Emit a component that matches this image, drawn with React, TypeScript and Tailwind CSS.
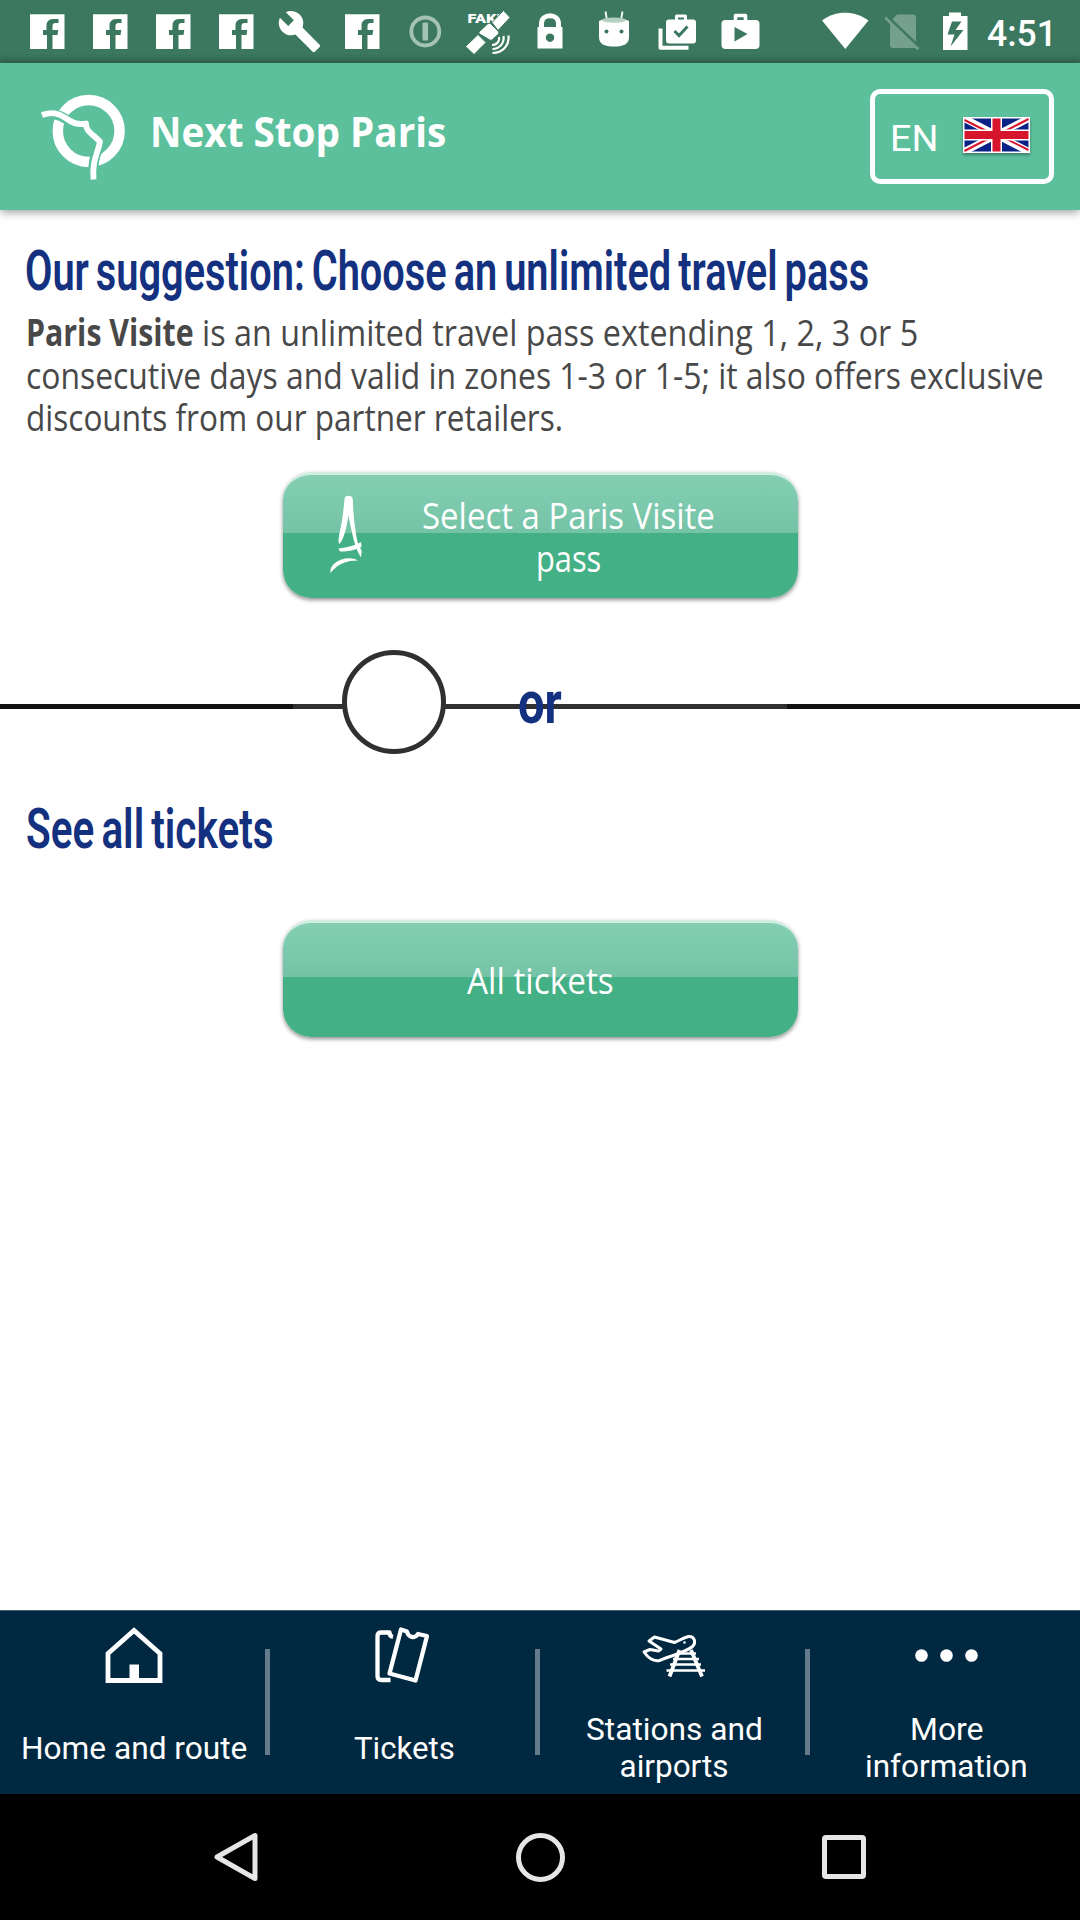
import { useLayoutEffect, useRef, useState } from "react";
import type { ReactNode } from "react";
import { MdBuild } from "react-icons/md";

/** A single line of text condensed or stretched horizontally to an exact width. */
function FitText({ width, className = "", children }: { width: number; className?: string; children: ReactNode }) {
  const ref = useRef<HTMLSpanElement>(null);
  const [scale, setScale] = useState(1);
  useLayoutEffect(() => {
    if (ref.current) setScale(width / ref.current.offsetWidth);
  }, [width]);
  return (
    <span className="block" style={{ width }}>
      <span
        ref={ref}
        className={`inline-block origin-left whitespace-nowrap ${className}`}
        style={{ transform: `scaleX(${scale})` }}
      >
        {children}
      </span>
    </span>
  );
}

function Slot({ children }: { children: ReactNode }) {
  return (
    <svg width="63" height="63" viewBox="0 0 63 63" fill="#fff" className="shrink-0">
      {children}
    </svg>
  );
}

function FacebookIcon() {
  return (
    <Slot>
      <path d="M14 14.300h34.500V49H36.500V35H41.500l.8-5h-5.800v-4c0-2 1-3 3-3h3v-4h-5.500c-4.500 0-6.500 3-6.500 6.500V30h-3.500v5H31v14H14z" />
    </Slot>
  );
}

function StatusBar() {
  return (
    <div className="flex h-[63px] items-center bg-linear-to-b from-[#3b785f] from-85% to-[#346a54] pl-4">
      <FacebookIcon />
      <FacebookIcon />
      <FacebookIcon />
      <FacebookIcon />
      <div className="flex h-[63px] w-[63px] items-center justify-center">
        <MdBuild className="h-[45px] w-[45px] text-white" />
      </div>
      <FacebookIcon />
      <Slot>
        <circle cx="31.300" cy="31.500" r="14" fill="none" stroke="#a4c3b5" strokeWidth="3.800" />
        <rect x="28.500" y="22.500" width="5.600" height="18" rx="1" fill="#a4c3b5" />
      </Slot>
      <Slot>
        <text x="10.500" y="22.500" fontSize="13" fontWeight="900" fontFamily="Roboto, sans-serif" textLength="38" lengthAdjust="spacingAndGlyphs">
          FAKE
        </text>
        <g stroke="#3b785f" strokeWidth="1">
          <path d="M35 22.500 46.500 10.500l6.500 7-12 13z" />
          <path d="M8.500 46.500 21 34.500l8 8L17 54.500z" />
          <path d="M22.500 31.500 30.500 24c1-1 2.500-1 3.500 0l7 7c1 1 1 2.500 0 3.500l-5.500 5c-1 1-2.500 1-3.500 0l-8.500-5c-2-1-2-2-1-3z" />
        </g>
        <g fill="none" stroke="#fff" strokeWidth="2.200">
          <path d="M42 37c1 4-2 8-7 8" />
          <path d="M46.500 36c1 7-4 13-11 13" />
          <path d="M51.500 35.500c1 10-6 17.500-16 17.500" />
        </g>
      </Slot>
      <Slot>
        <path d="M21.500 28V23.500c0-10.500 17-10.500 17 0V28" fill="none" stroke="#fff" strokeWidth="5" />
        <path fillRule="evenodd" d="M17.500 27h25v21.500h-25zM30 33.500a4.200 4.200 0 1 0 .01 0z" />
      </Slot>
      <Slot>
        <path d="M22.500 11.500 24 20M39.500 11.500 38 20" stroke="#fff" strokeWidth="1.800" />
        <path d="M16 21c5-3.500 25-3.500 30 0v16c0 7-5 9.500-15 9.500S16 44 16 37z" />
        <ellipse cx="31" cy="20.200" rx="12" ry="2.600" fill="#b5cfc3" />
        <circle cx="23.500" cy="31.500" r="2" fill="#3b785f" />
        <circle cx="38.500" cy="31.500" r="2" fill="#3b785f" />
      </Slot>
      <Slot>
        <path d="M14.500 28.500v19.300h28" fill="none" stroke="#fff" strokeWidth="4" strokeLinejoin="round" />
        <rect x="20" y="19.500" width="30" height="24" rx="3" />
        <path d="M30.500 20v-4h9v4" fill="none" stroke="#fff" strokeWidth="3" strokeLinejoin="round" />
        <path d="m28.500 31 4.500 4.500 8.500-9" fill="none" stroke="#3b785f" strokeWidth="3" />
      </Slot>
      <Slot>
        <rect x="12.500" y="20" width="38" height="29" rx="4" />
        <path d="M26.500 21v-5.500h10V21" fill="none" stroke="#fff" strokeWidth="3.600" strokeLinejoin="round" />
        <path d="M25.500 27v14.500L38.500 34z" fill="#3b785f" />
      </Slot>
      <svg width="250" height="63" viewBox="0 0 250 63" fill="#fff" className="ml-[34px] shrink-0">
        <path d="M16 20.500C29 10 49 10 62.500 20.500L39.300 49z" />
        <path d="M91 14.500h16c2 0 3 1 3 3V48H87c-2 0-3-1-3-3V22z" fill="#759f8e" />
        <path d="m80.500 15.500 33 31.500" stroke="#3b785f" strokeWidth="2.500" />
        <path d="m79.500 17.500 33 31.500" stroke="#759f8e" strokeWidth="3.200" />
        <path d="m81 16.500 32 30.500" stroke="#3b785f" strokeWidth="1.500" />
        <path fillRule="evenodd" d="M143 12.500h12V16h6.500v34H137V16h6zM146 21.500 141.500 34.500h7l-4 12L157.500 30h-8l6-8.500z" />
      </svg>
      <span className="-ml-[69px] pt-[5px] font-[Roboto,sans-serif] text-[37.500px] leading-none font-medium text-white">
        <FitText width={70}>4:51</FitText>
      </span>
    </div>
  );
}

function Logo() {
  return (
    <svg width="90" height="92" viewBox="40 90 90 92" fill="none" className="shrink-0">
      <circle cx="88.700" cy="130" r="30.900" stroke="#fff" strokeWidth="10.500" />
      <path
        d="M40 114.500c10-3 17-2 25 3 7 5 12 7.500 21 5.500 0 8 6 9 9 13l6 4c-4 12-9 16-7.500 40"
        stroke="#5dc09d"
        strokeWidth="10"
      />
      <path
        d="M42 114c10-3.500 16-2 23 2.700 7 5 12 7.500 21 5.800 0 7 4 9 8 12.500l6 5.500c-2 12-8 18-6.500 38"
        stroke="#fff"
        strokeWidth="5.800"
        strokeLinejoin="round"
      />
    </svg>
  );
}

function UnionJack() {
  return (
    <svg width="67" height="36" viewBox="0 0 67 36" className="mb-1 ml-[25px] shadow-[0_2px_3px_rgba(0,0,0,0.35)]">
      <rect width="67" height="36" fill="#fff" />
      <rect x="1.500" y="1.500" width="64" height="33" fill="#0a2286" />
      <path d="M1.500 1.500l64 33M65.500 1.500l-64 33" stroke="#fff" strokeWidth="7" />
      <path d="M1.500 3l25 12.500M1.500 34l25-13M65.500 2l-25 13M65.500 33l-25-12.500" stroke="#d6152c" strokeWidth="2" />
      <path d="M33.500 1v34M1 18h65" stroke="#fff" strokeWidth="11" />
      <path d="M33.500 1.500v33M1.500 18h64" stroke="#d6152c" strokeWidth="8" />
    </svg>
  );
}

function Header() {
  return (
    <header className="relative flex h-[147px] items-center bg-[#5dc09d] pr-[26px] pl-10 shadow-[0_2px_9px_rgba(0,0,0,0.4)]">
      <Logo />
      <h1 className="mb-[10px] ml-[20px] font-['Open_Sans',sans-serif] text-[40.500px] leading-[50px] font-bold text-white">
        <FitText width={296}>Next Stop Paris</FitText>
      </h1>
      <button className="ml-auto flex h-[95px] w-[184px] items-center rounded-[10px] border-[5px] border-white pl-[15px]">
        <span className="pt-[3px] font-[Roboto,sans-serif] text-[37px] leading-none text-white">
          <FitText width={48}>EN</FitText>
        </span>
        <UnionJack />
      </button>
    </header>
  );
}

function Eiffel() {
  return (
    <svg width="34" height="80" viewBox="330 495 34 80" fill="#fff" className="shrink-0">
      <path d="M344.500 499c0-4.500 8-4.500 8.300 0 .3 14 1.700 28 4.700 43l4.200 9-.7 6.500c-6-9-9-24-12.500-42-2 11-4 22-8.500 28-2 1-1.500-3-1-8 3-13 4.500-24 5.500-36.500z" />
      <path d="M338.500 548.500c7-.5 15-2.500 22.500-6.500l.5 5c-7 3.500-16 5-21.500 4.500z" />
      <path d="M330.500 573c-1-6 4-11 11-13.500 6-2 12-1.800 16.500 1-11 0-20 3-27.500 12.500z" />
    </svg>
  );
}

function PassDivider() {
  return (
    <div className="relative mt-[52px] flex h-[104px] items-center bg-white">
      <div className="mt-[9px] flex h-[5px] w-full">
        <div className="w-[293px] bg-[#111]" />
        <div className="flex-1 bg-[#303033]" />
        <div className="w-[293px] bg-[#111]" />
      </div>
      <div className="absolute top-0 left-[342px] h-[104px] w-[104px] rounded-full border-[5px] border-[#303033] bg-white" />
      <div className="absolute top-[18px] left-[518px] font-[Roboto,sans-serif] text-[60px] leading-[70px] font-bold text-[#14317f]">
        <FitText width={44}>or</FitText>
      </div>
    </div>
  );
}

function TicketsIcon() {
  return (
    <svg width="60" height="60" viewBox="374.500 1625 60 60" fill="none" stroke="#fff" strokeWidth="4.300" strokeLinejoin="round">
      <path d="M391 1680h-9c-2.500 0-4-1.500-4-4v-40c0-2.500 1.500-3.500 4-3.500h8c0 3 1 4 3.500 4.500" />
      <path d="m401.500 1629.500 6 2c1 6 8 7.500 11 2.500l9 2-11.500 44.500-26-7z" />
    </svg>
  );
}

function HomeIcon() {
  return (
    <svg width="60" height="60" viewBox="103.500 1625 60 60" fill="none">
      <path d="M107.500 1680.500v-27l26-23 26 23v27z" stroke="#fff" strokeWidth="4.800" />
      <path d="M129 1664.500h9.500v16H129z" fill="#fff" />
    </svg>
  );
}

function StationsIcon() {
  return (
    <svg width="66" height="60" viewBox="641 1625 66 60" fill="none" stroke="#fff" strokeWidth="3" strokeLinejoin="round">
      <path d="M644 1652l6-2.500 8.500 1.500 2.500-2-12-8 5.500-4 20 5.500c5-2 9-5 14-6 6-.5 8 6 4 10-7 6-21 9-33 14-6 1-11-2-15.500-8.500z" />
      <circle cx="684.500" cy="1642.500" r="1.300" fill="#fff" stroke="none" />
      <path d="M679.500 1650 669.500 1676.500M691 1650l11 26.500" strokeWidth="3.800" />
      <path d="M677 1653.500h19M673 1659h26M670 1664.500h31M666.500 1670.500h38.500" strokeWidth="2.600" />
    </svg>
  );
}

function DotsIcon() {
  return (
    <svg width="64" height="60" viewBox="915 1624.500 64 60" fill="#fff">
      <circle cx="921.500" cy="1655" r="6.300" />
      <circle cx="946.500" cy="1655" r="6.300" />
      <circle cx="971.500" cy="1655" r="6.300" />
    </svg>
  );
}

function NavItem({ icon, lines, divider = true }: { icon: ReactNode; lines: { text: string; width: number }[]; divider?: boolean }) {
  return (
    <div className="flex flex-1">
      <div className="flex min-w-0 flex-1 flex-col items-center pt-[14px] pl-[3px]">
        {icon}
        <div className="mt-[26px] flex h-[74px] flex-col items-center justify-center font-[Roboto,sans-serif] text-[31.500px] leading-[37px] text-white">
          {lines.map((line) => (
            <FitText key={line.text} width={line.width}>
              {line.text}
            </FitText>
          ))}
        </div>
      </div>
      <div className={divider ? "mt-[38px] h-[106px] w-[5px] bg-[#637b8b]" : "w-0"} />
    </div>
  );
}

export default function App() {
  return (
    <div className="flex h-[1920px] w-[1080px] flex-col overflow-hidden bg-white">
      <StatusBar />
      <Header />
      <main className="flex-1 pt-[31px]">
        <h2 className="pl-[25px] font-[Roboto,sans-serif] text-[55px] leading-[60px] font-semibold text-[#14317f]">
          <FitText width={844} className="[word-spacing:-4px]">
            Our suggestion: Choose an unlimited travel pass
          </FitText>
        </h2>
        <p className="mt-[10px] pl-[26px] font-['Open_Sans',sans-serif] text-[37px] leading-[42.700px] text-[#484848]">
          <span className="flex">
            <FitText width={168} className="font-bold">
              Paris Visite
            </FitText>
            <span className="pl-[8px]">
              <FitText width={716}>is an unlimited travel pass extending 1, 2, 3 or 5</FitText>
            </span>
          </span>
          <FitText width={1018}>consecutive days and valid in zones 1-3 or 1-5; it also offers exclusive</FitText>
          <FitText width={537}>discounts from our partner retailers.</FitText>
        </p>
        <button className="mx-auto mt-[33px] flex h-[126px] w-[515px] items-center rounded-[28px] border-t-[3px] border-[#d2ede2] [background-image:linear-gradient(#84cfb4_0%,#75c3a6_47.500%,#43b086_47.500%)] pl-[47px] shadow-[0_2px_4px_rgba(0,0,0,0.45)]">
          <span className="pb-[4px]">
            <Eiffel />
          </span>
          <span className="ml-[58px] flex flex-col items-center font-['Open_Sans',sans-serif] text-[36px] leading-[43px] text-white">
            <FitText width={293}>Select a Paris Visite</FitText>
            <FitText width={65}>pass</FitText>
          </span>
        </button>
        <PassDivider />
        <h2 className="mt-[45px] pl-[26px] font-[Roboto,sans-serif] text-[55px] leading-[60px] font-semibold text-[#14317f]">
          <FitText width={248} className="[word-spacing:-4px]">
            See all tickets
          </FitText>
        </h2>
        <button className="mx-auto mt-[61px] flex h-[117px] w-[515px] items-center justify-center rounded-[28px] border-t-[3px] border-[#d2ede2] [background-image:linear-gradient(#84cfb4_0%,#75c3a6_47.500%,#43b086_47.500%)] shadow-[0_2px_4px_rgba(0,0,0,0.45)]">
          <span className="font-['Open_Sans',sans-serif] text-[36px] leading-[43px] text-white">
            <FitText width={147}>All tickets</FitText>
          </span>
        </button>
      </main>
      <nav className="flex h-[184px] shrink-0 border-t border-[#46606c] bg-[#002840]">
        <NavItem icon={<HomeIcon />} lines={[{ text: "Home and route", width: 226 }]} />
        <NavItem icon={<TicketsIcon />} lines={[{ text: "Tickets", width: 101 }]} />
        <NavItem
          icon={<StationsIcon />}
          lines={[
            { text: "Stations and", width: 177 },
            { text: "airports", width: 109 },
          ]}
        />
        <NavItem
          divider={false}
          icon={<DotsIcon />}
          lines={[
            { text: "More", width: 74 },
            { text: "information", width: 163 },
          ]}
        />
      </nav>
      <div className="flex h-[126px] shrink-0 items-center justify-between bg-black pr-[210px] pl-[210px]">
        <svg width="50" height="56" viewBox="0 0 50 56" fill="none">
          <path d="M7 28 45 6.500v43z" stroke="#e6e6e6" strokeWidth="5" strokeLinejoin="round" />
        </svg>
        <div className="mr-[1px] h-[49px] w-[49px] rounded-full border-[5px] border-[#e6e6e6]" />
        <div className="mr-[4px] h-[44px] w-[44px] rounded-[4px] border-[5px] border-[#e6e6e6]" />
      </div>
    </div>
  );
}
